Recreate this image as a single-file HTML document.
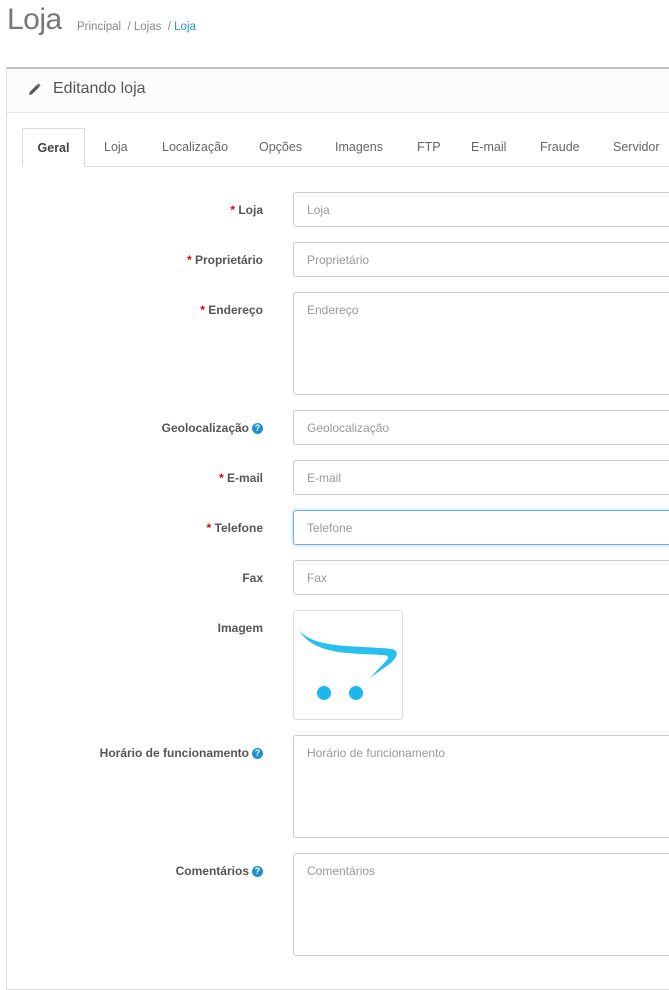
<!DOCTYPE html><html><head><meta charset="utf-8"><style>
body{margin:0;width:669px;height:968px;overflow:hidden;background:#fff;font-family:"Liberation Sans",sans-serif;color:#666;position:relative}
.a{position:absolute}
h1{position:absolute;left:7px;top:3px;margin:0;font-weight:normal;font-size:30px;color:#777;letter-spacing:-0.5px}
.bc{left:77px;top:21px;font-size:11.5px;color:#888}
.bc span{color:#1e91cf}
.panel{left:6px;top:67px;width:700px;height:920px;border:1px solid #ddd;border-top:2px solid #bfbfbf}
.ph{left:7px;top:69px;width:700px;height:43px;background:#fcfcfc;border-bottom:1px solid #e5e5e5}
.ph .t{position:absolute;left:46px;top:11px;font-size:16px;color:#555}
.tabline{left:22px;top:166px;width:660px;height:1px;background:#ddd}
.tab{top:128px;height:38px;line-height:38px;font-size:12.5px;color:#666}
.tab.act{left:22px;width:63px;border:1px solid #ddd;border-bottom:1px solid #fff;background:#fff;text-align:center;font-weight:bold;color:#444;box-sizing:border-box;height:39px}
.lb{right:406px;font-size:12px;font-weight:bold;color:#555;text-align:right;white-space:nowrap}
.lb i{color:#e00;font-style:normal}
.q{display:inline-block;width:11px;height:11px;border-radius:50%;background:#1e91cf;color:#fff;font-size:9px;line-height:11px;text-align:center;vertical-align:1px;margin-left:3px}
.in{left:293px;width:400px;border:1px solid #ccc;border-radius:3px;box-sizing:border-box;font-size:12px;color:#999;padding:10px 13px}
</style></head><body>
<h1>Loja</h1>
<div class="a bc">Principal &nbsp;/ Lojas &nbsp;/ <span>Loja</span></div>
<div class="a panel"></div>
<div class="a ph"><svg style="position:absolute;left:20px;top:14px" width="14" height="14" viewBox="0 0 14 14"><path d="M2 12 L2.8 9 L10 1.8 L12.2 4 L5 11.2 Z" fill="#555"/><path d="M10.8 1 L13 3.2" stroke="#555" stroke-width="1.5"/></svg><div class="t">Editando loja</div></div>
<div class="a tabline"></div>
<div class="a tab act">Geral</div>
<div class="a tab" style="left:104px">Loja</div>
<div class="a tab" style="left:162px">Localização</div>
<div class="a tab" style="left:259px">Opções</div>
<div class="a tab" style="left:335px">Imagens</div>
<div class="a tab" style="left:417px">FTP</div>
<div class="a tab" style="left:471px">E-mail</div>
<div class="a tab" style="left:540px">Fraude</div>
<div class="a tab" style="left:613px">Servidor</div>

<div class="a lb" style="top:203px"><i>*</i> Loja</div><div class="a in" style="top:192px;height:35px">Loja</div>
<div class="a lb" style="top:253px"><i>*</i> Proprietário</div><div class="a in" style="top:242px;height:35px">Proprietário</div>
<div class="a lb" style="top:303px"><i>*</i> Endereço</div><div class="a in" style="top:292px;height:103px">Endereço</div>
<div class="a lb" style="top:421px">Geolocalização<span class="q">?</span></div><div class="a in" style="top:410px;height:35px">Geolocalização</div>
<div class="a lb" style="top:471px"><i>*</i> E-mail</div><div class="a in" style="top:460px;height:35px">E-mail</div>
<div class="a lb" style="top:521px"><i>*</i> Telefone</div><div class="a in" style="top:510px;height:35px;border-color:#66afe9;box-shadow:0 0 4px rgba(102,175,233,.5)">Telefone</div>
<div class="a lb" style="top:571px">Fax</div><div class="a in" style="top:560px;height:35px">Fax</div>
<div class="a lb" style="top:621px">Imagem</div>
<div class="a" style="left:293px;top:610px;width:110px;height:110px;border:1px solid #ddd;border-radius:3px;box-sizing:border-box">
<svg width="108" height="108" viewBox="0 0 108 108" style="position:absolute;left:0;top:0"><path d="M5 19 C20 38 60 34 98 38 C105 40 104 45 97 52 L76 67 L92 50 C96 46 94 44 88 44 C55 42 20 44 5 19 Z" fill="#27bfee"/><circle cx="30" cy="82" r="7" fill="#1fb6ec"/><circle cx="62" cy="82" r="7" fill="#1fb6ec"/></svg></div>
<div class="a lb" style="top:746px">Horário de funcionamento<span class="q">?</span></div><div class="a in" style="top:735px;height:103px">Horário de funcionamento</div>
<div class="a lb" style="top:864px">Comentários<span class="q">?</span></div><div class="a in" style="top:853px;height:103px">Comentários</div>
</body></html>
